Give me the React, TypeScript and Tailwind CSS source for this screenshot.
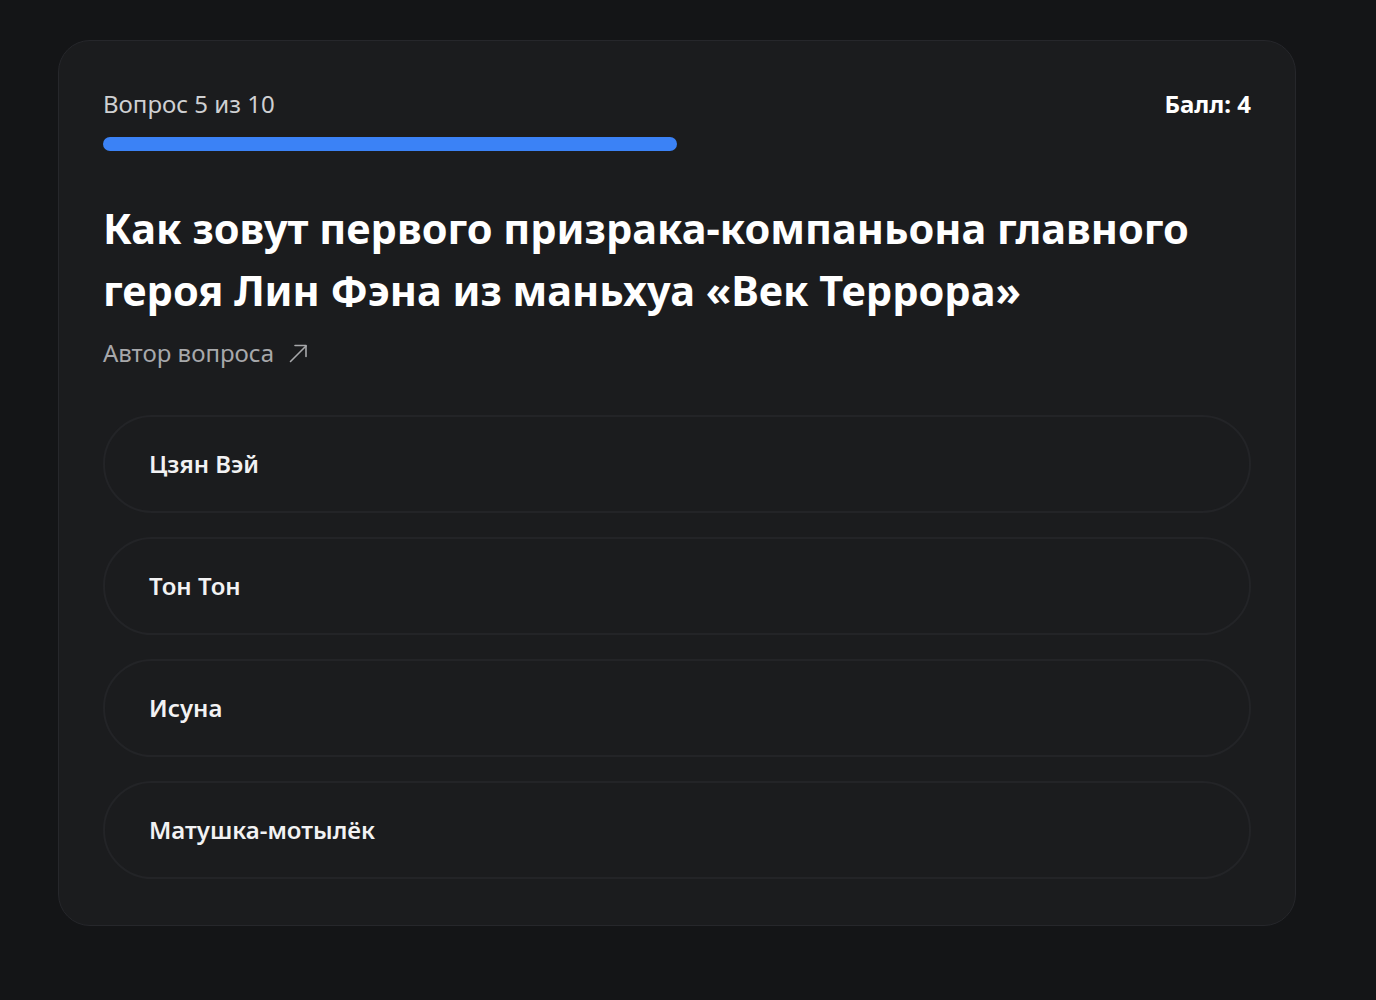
import React from 'react';

interface QuizCardProps {
  current: number;
  total: number;
  score: number;
  question: string;
  answers: string[];
}

// thin "open in new" arrow next to the author link
const ArrowOut = () => (
  <svg width="20" height="20" viewBox="0 0 20 20" fill="none" stroke="currentColor" strokeWidth="1.6" strokeLinecap="round" strokeLinejoin="round">
    <path d="M2.5 18.5 L18 3" />
    <path d="M7 2.5 H18 V13.5" />
  </svg>
);

const QuizCard: React.FC<QuizCardProps> = ({ current, total, score, question, answers }) => {
  const progress = Math.min((current / total) * 100, 100);

  return (
    <div className="rounded-[32px] border border-[#26272b] bg-[#1b1c1e] px-11 pt-11 pb-[46px]">
      <div className="flex items-center justify-between h-[38px]">
        <span className="text-[24px] text-[#cfd0d2]">
          Вопрос {current} из {total}
        </span>
        <span className="text-[24px] font-bold text-white">Балл: {score}</span>
      </div>

      <div className="mt-[14px] h-[14px] w-full rounded-full">
        <div className="h-[14px] rounded-full bg-[#3b82f6]" style={{ width: `${progress}%` }} />
      </div>

      <h1 className="mt-[46px] text-[41.5px] font-bold leading-[62px] text-white">{question}</h1>

      <a href="#" className="mt-[14px] flex items-center gap-[14px] text-[24px] text-[#a7a8ab]">
        <span>Автор вопроса</span>
        <ArrowOut />
      </a>

      <div className="mt-[44px] flex flex-col gap-6">
        {answers.map((answer) => (
          <button
            key={answer}
            className="flex h-[98px] w-full items-center rounded-full border-2 border-[#232427] bg-[#1b1c1e] px-[44px] text-left text-[24px] font-semibold text-[#f2f2f3]"
          >
            {answer}
          </button>
        ))}
      </div>
    </div>
  );
};

export default function App() {
  return (
    <div className="min-h-[1000px] bg-[#141517] pl-[58px] pr-[80px] pt-[40px]" style={{ fontFamily: '"Noto Sans", sans-serif' }}>
      <QuizCard
        current={5}
        total={10}
        score={4}
        question="Как зовут первого призрака-компаньона главного героя Лин Фэна из маньхуа «Век Террора»"
        answers={['Цзян Вэй', 'Тон Тон', 'Исуна', 'Матушка-мотылёк']}
      />
    </div>
  );
}
